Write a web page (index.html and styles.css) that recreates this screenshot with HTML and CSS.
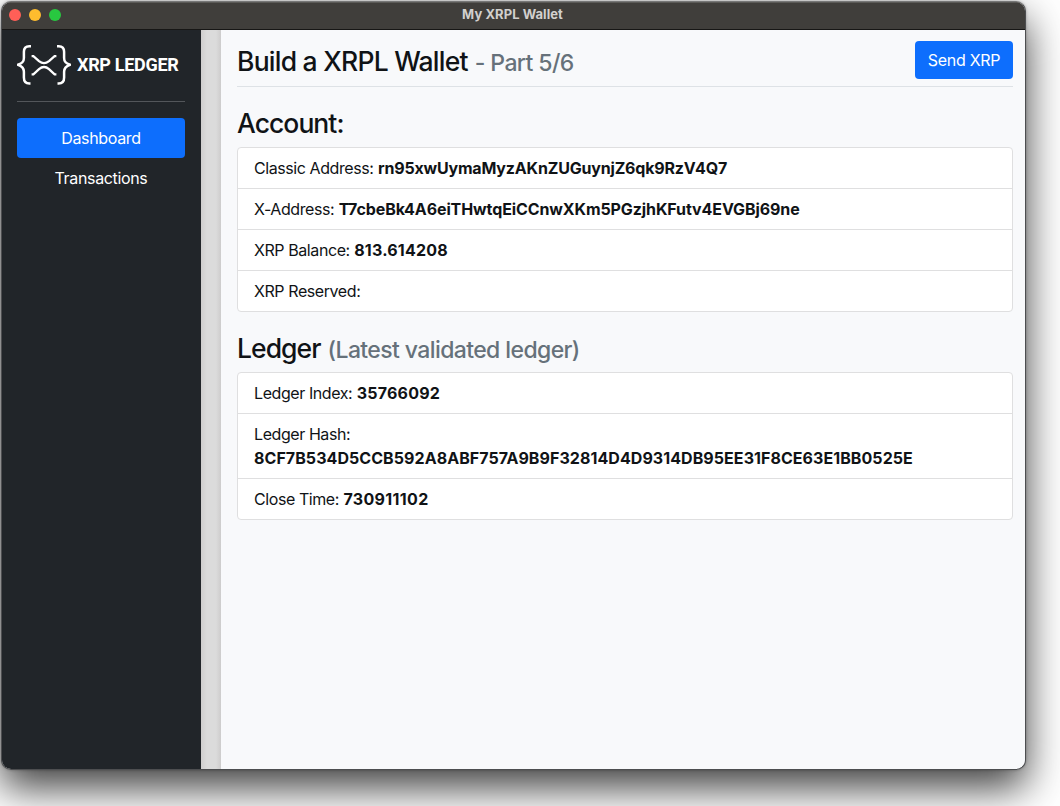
FILE: index.html
```html
<!DOCTYPE html>
<html lang="en">
<head>
<meta charset="utf-8">
<title>My XRPL Wallet</title>
<link rel="stylesheet" href="styles.css">
</head>
<body>
<div class="window">
  <header class="titlebar">
    <div class="lights"><i class="light red"></i><i class="light yellow"></i><i class="light green"></i></div>
    <div class="caption">My XRPL Wallet</div>
  </header>
  <div class="body">
    <nav class="sidebar">
      <div class="brand">
        <svg class="logo" width="54" height="42" viewBox="0 0 54 42" fill="none" stroke="#fff" stroke-width="2.5">
          <path d="M14 2.2H12.3C8.2 2.2 6.9 4.3 6.9 7.8V14C6.9 17.5 5.6 19.2 1 20.8C5.6 22.4 6.9 24.2 6.9 27.8V33.5C6.9 37.3 8.4 39.5 12.4 39.5H13.5"/>
          <path d="M40 2.2H41.7C45.8 2.2 47.1 4.3 47.1 7.8V14C47.1 17.5 48.4 19.2 53 20.8C48.4 22.4 47.1 24.2 47.1 27.8V33.5C47.1 37.3 45.6 39.5 41.6 39.5H40.5"/>
          <path stroke-width="2.3" d="M14.6 12.1H16.4L22 17.1C25 19.5 29 19.5 32 17.1L37.6 12.1H39.4"/>
          <path stroke-width="2.3" d="M14.6 30.3H16.4L22 25.1C25 22.6 29 22.6 32 25.1L37.6 30.3H39.4"/>
        </svg>
        <span class="brand-name">XRP LEDGER</span>
      </div>
      <div class="rule"></div>
      <a class="link active">Dashboard</a>
      <a class="link">Transactions</a>
    </nav>
    <div class="divider"></div>
    <main class="content">
      <div class="page-head">
        <h1 class="heading">Build a XRPL Wallet<small class="muted">- Part 5/6</small></h1>
        <button class="button">Send XRP</button>
      </div>
      <h2 class="heading section">Account:</h2>
      <ul class="list">
        <li><span class="label">Classic Address:</span> <b class="address">rn95xwUymaMyzAKnZUGuynjZ6qk9RzV4Q7</b></li>
        <li><span class="label">X-Address:</span> <b class="x-address">T7cbeBk4A6eiTHwtqEiCCnwXKm5PGzjhKFutv4EVGBj69ne</b></li>
        <li><span class="label">XRP Balance:</span> <b class="number">813.614208</b></li>
        <li><span class="label">XRP Reserved:</span></li>
      </ul>
      <h2 class="heading section">Ledger<small class="muted">(Latest validated ledger)</small></h2>
      <ul class="list">
        <li><span class="label">Ledger Index:</span> <b class="number">35766092</b></li>
        <li><span class="label">Ledger Hash:</span><br><b class="hash">8CF7B534D5CCB592A8ABF757A9B9F32814D4D9314DB95EE31F8CE63E1BB0525E</b></li>
        <li><span class="label">Close Time:</span> <b class="number time">730911102</b></li>
      </ul>
    </main>
  </div>
</div>
</body>
</html>
```
FILE: styles.css
```css
* { box-sizing: border-box; }
body {
  margin: 0;
  height: 806px;
  padding: 1px;
  overflow: hidden;
  background: #fff;
  color: #101316;
  font: 16px/24px Inter, "Liberation Sans", sans-serif;
}
.window {
  display: flex;
  flex-direction: column;
  width: 1025px;
  height: 769px;
  border: 1px solid #4d4e50;
  border-top-color: #777;
  border-radius: 10px;
  overflow: hidden;
  background: #f8f9fb;
  box-shadow: 0 18px 40px rgba(0, 0, 0, .75), 0 0 3px rgba(0, 0, 0, .3);
}
.titlebar {
  display: grid;
  flex: none;
  height: 28px;
  border-top: 1px solid #5b5a57;
  border-bottom: 1px solid #171615;
  background: #403e3b;
}
.lights, .caption { grid-area: 1 / 1; }
.lights { display: flex; gap: 8px; padding: 6px 0 0 7px; }
.light { width: 12px; height: 12px; border-radius: 50%; }
.red { background: #ff5f57; }
.yellow { background: #febc2e; }
.green { background: #28c840; }
.caption {
  padding-right: 2px;
  color: #d2d0ce;
  font-size: 13px;
  font-weight: 700;
  line-height: 23px;
  letter-spacing: .06px;
  text-align: center;
}
.body { display: flex; flex: 1; }
.sidebar { width: 199px; padding: 14px 16px 0 15px; background: #212529; color: #fff; }
.brand { display: flex; align-items: center; gap: 6px; height: 42px; white-space: nowrap; }
.logo { flex: none; }
.brand-name { font: 700 18px/24px Roboto, sans-serif; letter-spacing: -.3px; }
.rule { height: 1px; margin: 15px 0 16px; background: #53565a; }
.link { display: block; height: 40px; padding: 8px 0; border-radius: 4px; letter-spacing: -.34px; text-align: center; }
.active { background: #0d6efd; }
.divider { width: 20px; background: linear-gradient(90deg, #cfcece, #dbdbdb 30%, #dbdbdb 75%, #cdcccc); }
.content { flex: 1; padding: 11px 12px 0 16px; }
.page-head {
  display: flex;
  justify-content: space-between;
  height: 46px;
  border-bottom: 1px solid #dee2e6;
}
.heading {
  height: 34px;
  margin: 0;
  font-size: 26.5px;
  font-weight: 500;
  line-height: 34px;
  letter-spacing: -.76px;
  white-space: nowrap;
}
.page-head .heading { padding-top: 3px; }
.section { letter-spacing: -.95px; }
.muted {
  margin-left: 7px;
  color: #66717a;
  font-size: 23px;
  font-weight: 500;
  line-height: 24px;
  letter-spacing: -.6px;
}
.button {
  width: 98px;
  height: 38px;
  padding: 0;
  border: 0;
  border-radius: 4px;
  background: #0d6efd;
  color: #fff;
  font: 16px/24px Inter, sans-serif;
  letter-spacing: -.3px;
}
.section { margin: 19px 0 7px; }
.list {
  margin: 0;
  padding: 0;
  border: 1px solid #dfdfe0;
  border-radius: 4px;
  background: #fff;
  list-style: none;
}
.list li { padding: 8px 16px; border-bottom: 1px solid #dfdfe0; }
.list li:last-child { border-bottom: 0; }
.label { letter-spacing: -.42px; }
.address { letter-spacing: -.18px; }
.x-address { letter-spacing: -.1px; }
.number { letter-spacing: .2px; }
.time { letter-spacing: .33px; }
.hash { letter-spacing: .063px; }
```
